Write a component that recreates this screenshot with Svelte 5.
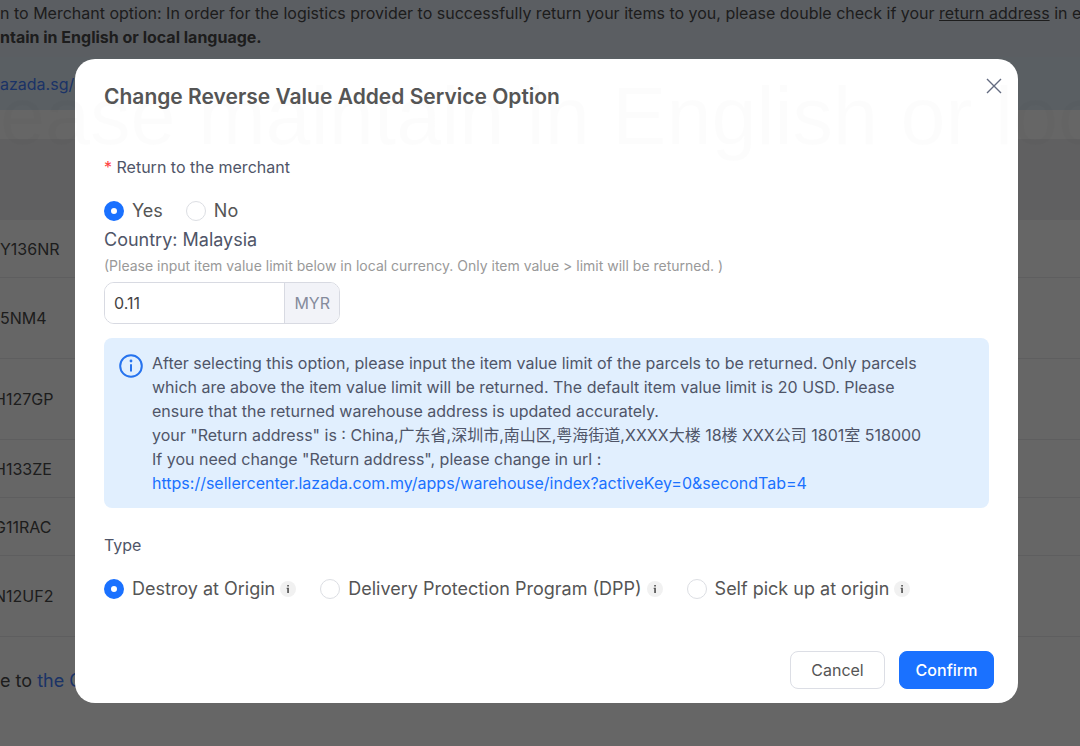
<script lang="ts">
  const rows = [
    { code: 'Y136NR', size: 'small', clipped: false },
    { code: '5NM4', size: 'large', clipped: false },
    { code: 'H127GP', size: 'large', clipped: true },
    { code: 'H133ZE', size: 'small', clipped: true },
    { code: 'G11RAC', size: 'small', clipped: true },
    { code: 'N12UF2', size: 'large', clipped: true }
  ];
  const types = [
    { value: 'destroy', label: 'Destroy at Origin' },
    { value: 'dpp', label: 'Delivery Protection Program (DPP)' },
    { value: 'pickup', label: 'Self pick up at origin' }
  ];

  let returnToMerchant = $state('yes');
  let limit = $state('0.11');
  let type = $state('destroy');
</script>

<div class="screen">
  <main class="page">
    <div class="notice">
      n to Merchant option: In order for the logistics provider to successfully return your items to you, please double check if your <a class="plain" href="#address">return address</a> in e<br />
      <b>ntain in English or local language.</b>
    </div>
    <div class="link-bar"><a href="#seller">azada.sg/a</a></div>
    <table>
      <thead>
        <tr><th></th></tr>
      </thead>
      <tbody>
        {#each rows as row}
          <tr class={row.size}>
            <td><span class:clipped={row.clipped}>{row.code}</span></td>
          </tr>
        {/each}
      </tbody>
    </table>
    <p class="note">e to <a href="#contact">the C</a></p>
  </main>

  <div class="mask">
    <div class="modal" role="dialog" aria-modal="true" aria-labelledby="modal-title">
      <header>
        <h1 id="modal-title">Change Reverse Value Added Service Option</h1>
        <button class="close" type="button" aria-label="Close">
          <svg viewBox="0 0 16 16" width="16" height="16">
            <path d="M1 1l14 14M15 1l-14 14" />
          </svg>
        </button>
      </header>

      <fieldset>
        <legend><span class="required">*</span> Return to the merchant</legend>
        <div class="radios">
          <label><input type="radio" name="return" value="yes" bind:group={returnToMerchant} />Yes</label>
          <label><input type="radio" name="return" value="no" bind:group={returnToMerchant} />No</label>
        </div>
      </fieldset>

      <label class="country" for="limit">Country: Malaysia</label>
      <p class="hint">(Please input item value limit below in local currency. Only item value &gt; limit will be returned. )</p>
      <div class="amount">
        <input id="limit" type="text" bind:value={limit} />
        <span>MYR</span>
      </div>

      <div class="alert">
        <svg viewBox="0 0 24 24" width="24" height="24" aria-hidden="true">
          <circle cx="12" cy="12" r="10.8" />
          <path d="M12 10.2v7.4" />
          <circle class="dot" cx="12" cy="7" r="1.4" />
        </svg>
        <div>
          After selecting this option, please input the item value limit of the parcels to be returned. Only parcels which are above the item value limit will be returned. The default item value limit is 20 USD. Please ensure that the returned warehouse address is updated accurately.<br />
          your "Return address" is : China,广东省,深圳市,南山区,粤海街道,XXXX大楼 18楼 XXX公司 1801室 518000<br />
          If you need change "Return address", please change in url :<br />
          <a href="https://sellercenter.lazada.com.my/apps/warehouse/index?activeKey=0&secondTab=4">https://sellercenter.lazada.com.my/apps/warehouse/index?activeKey=0&amp;secondTab=4</a>
        </div>
      </div>

      <fieldset class="type">
        <legend>Type</legend>
        <div class="radios">
          {#each types as item}
            <label>
              <input type="radio" name="type" value={item.value} bind:group={type} />{item.label}
              <svg class="tip" viewBox="0 0 16 16" width="16" height="16" aria-hidden="true">
                <circle cx="8" cy="8" r="8" />
                <path d="M7.2 4h1.7v1.6H7.2zM6.7 6.8h2.2V12H7.2V7.9h-.5z" />
              </svg>
            </label>
          {/each}
        </div>
      </fieldset>

      <footer>
        <button type="button">Cancel</button>
        <button class="primary" type="button">Confirm</button>
      </footer>
    </div>
  </div>

  <div class="watermark" aria-hidden="true">ease maintain in English or loc</div>
</div>

<style>
  :global(body) {
    background: #fff;
  }
  .screen {
    position: relative;
    min-height: 100vh;
    overflow: hidden;
    font: 16px/24px Inter, 'Noto Sans CJK SC', sans-serif;
    color: #4f5568;
  }
  h1, p {
    margin: 0;
  }
  a {
    color: #1a71ff;
    text-decoration: none;
  }

  .page {
    color: #4a4a4a;
  }
  .page a {
    color: #4580ff;
  }
  .notice {
    padding: 1px 0 8px;
    background: #e4ebf6;
    white-space: nowrap;
  }
  .page .plain {
    color: inherit;
    text-decoration: underline;
  }
  .link-bar {
    padding: 15px 0 14px;
    margin-bottom: 29px;
    background: #e0edf8;
  }
  table {
    width: 100%;
    border-collapse: collapse;
  }
  th {
    height: 81px;
    padding: 0;
    background: #f1f1f3;
  }
  td {
    height: 57px;
    padding: 0;
    border-bottom: 1px solid #ebebed;
  }
  .large td {
    height: 80px;
  }
  .clipped {
    margin-left: -6px;
  }
  .note {
    padding-top: 32px;
    font-size: 18px;
  }

  .mask {
    position: absolute;
    inset: 0;
    padding: 59px 62px 43px 75px;
    background: rgba(0, 0, 0, 0.6);
  }
  .modal {
    padding: 25px 29px 14px;
    border-radius: 20px;
    background: #fff;
  }
  header {
    display: flex;
    justify-content: space-between;
    align-items: flex-start;
    margin-bottom: 45px;
  }
  h1 {
    font-size: 21px;
    line-height: 26px;
    font-weight: 600;
    color: #555;
  }
  .close {
    display: flex;
    margin: -14px -21px 0 0;
    padding: 8px;
    border: 0;
    background: none;
    cursor: pointer;
  }
  .close path {
    stroke: #636b80;
    stroke-width: 1.4;
    fill: none;
  }

  fieldset {
    margin: 0;
    padding: 0;
    border: 0;
  }
  legend {
    padding: 0;
    margin-bottom: 20px;
  }
  .required {
    color: #ff4040;
  }
  .radios {
    display: flex;
    gap: 23px;
    font-size: 18px;
    color: #555;
  }
  .radios label {
    display: flex;
    align-items: center;
    white-space: nowrap;
  }
  input[type='radio'] {
    appearance: none;
    width: 20px;
    height: 20px;
    margin: 0 8px 0 0;
    border: 1px solid #dcdee3;
    border-radius: 50%;
    background: #fff;
  }
  input[type='radio']:checked {
    border: 7px solid #1a71ff;
  }
  .type .radios {
    gap: 24px;
  }
  .country {
    display: block;
    margin-top: 3px;
    font-size: 18px;
    line-height: 28px;
  }
  .hint {
    margin: 2px 0 6px;
    font-size: 14px;
    line-height: 20px;
    color: #999;
  }
  .amount {
    display: flex;
    width: 236px;
    height: 42px;
    box-sizing: border-box;
    border: 1px solid #d8dae2;
    border-radius: 10px;
    overflow: hidden;
  }
  .amount input {
    flex: 1;
    min-width: 0;
    padding: 0 9px;
    border: 0;
    outline: 0;
    font: inherit;
    color: #444;
  }
  .amount span {
    display: flex;
    align-items: center;
    padding: 0 9px;
    border-left: 1px solid #d8dae2;
    background: #f2f3f8;
    color: #858b9c;
  }
  .alert {
    display: flex;
    gap: 9px;
    margin: 14px 0 25px;
    padding: 13px 40px 13px 15px;
    border-radius: 8px;
    background: #e1effe;
  }
  .alert svg {
    flex: none;
    margin-top: 3px;
    fill: none;
    stroke: #2673ee;
    stroke-width: 2;
  }
  .alert .dot {
    fill: #2673ee;
    stroke: none;
  }
  .tip {
    margin-left: 5px;
  }
  .tip circle {
    fill: #f1f1f1;
  }
  .tip path {
    fill: #555;
  }
  footer {
    display: flex;
    justify-content: flex-end;
    gap: 14px;
    margin: 50px -5px 0 0;
  }
  footer button {
    width: 95px;
    height: 38px;
    padding: 0;
    border: 1px solid #dcdee5;
    border-radius: 8px;
    background: #fff;
    font: inherit;
    color: #555;
    cursor: pointer;
  }
  footer .primary {
    border-color: #1a71ff;
    background: #1a71ff;
    color: #fff;
    font-weight: 500;
  }

  .watermark {
    position: absolute;
    top: 66px;
    left: 0;
    font-family: 'Liberation Sans', sans-serif;
    font-size: 81px;
    line-height: 100px;
    white-space: nowrap;
    color: rgba(0, 0, 0, 0.012);
    pointer-events: none;
  }
</style>
